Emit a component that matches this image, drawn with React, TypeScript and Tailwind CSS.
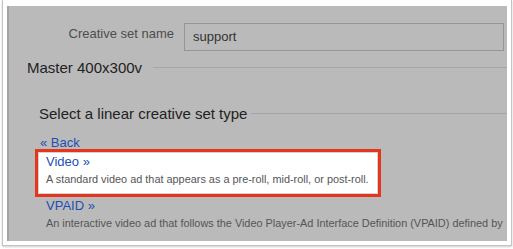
import React from "react";

const SectionTitle: React.FC<{ title: string; className?: string; gap?: string }> = ({ title, className, gap }) => (
  <div className={`flex items-center text-[15px] leading-[17px] text-[#222] ${className ?? ""}`}>
    <span className="whitespace-nowrap">{title}</span>
    <div className={`flex-1 h-px bg-[#a6a6a6] ${gap ?? "ml-[11px]"}`} />
  </div>
);

const App: React.FC = () => {
  return (
    <div className="w-[513px] h-[249px] bg-white overflow-hidden font-['Liberation_Sans',Arial,sans-serif]">
      <div className="ml-[2px] w-[510px] h-[246px] border-x border-b border-[#c4c4c4] shadow-[0_1px_2px_rgba(0,0,0,0.2)] pt-[6px] px-[4px] pb-[4px]">
        <div className="h-[235px] bg-[#bababa] border-l-2 border-[#a3a3a3] overflow-hidden">
          {/* name row */}
          <div className="flex items-start pt-[17px]">
            <label className="w-[165px] text-right text-[13px] leading-[15px] text-[#4d4d4d] mt-[3px]">
              Creative set name
            </label>
            <div className="ml-[10px] mr-[3px] flex-1 h-[28px] border border-[#969696] pl-[8px] flex items-center text-[13px] text-[#333]">
              support
            </div>
          </div>

          <SectionTitle title="Master 400x300v" className="mt-[8px] pl-[18px]" />

          <SectionTitle title="Select a linear creative set type" className="mt-[29px] pl-[30px]" gap="ml-[4px]" />

          <a className="block mt-[14px] ml-[31px] text-[13px] leading-[13px] text-[#1f4fb2]">
            « Back
          </a>

          <div className="ml-[26px] w-[346px] h-[48px] border-[3px] border-[#e5351d]">
            <div className="h-full bg-white border border-[#d2d2d2] pl-[7px] pt-[1px]">
              <a className="block text-[13px] leading-[15px] text-[#1f4fb2]">Video »</a>
              <p className="mt-[3px] text-[10.9px] leading-[14px] text-[#555] whitespace-nowrap">
                A standard video ad that appears as a pre-roll, mid-roll, or post-roll.
              </p>
            </div>
          </div>

          <div className="pl-[37px] pt-[1px]">
            <a className="block text-[13px] leading-[15px] text-[#1f4fb2]">VPAID »</a>
            <p className="mt-[3px] text-[10.9px] leading-[14px] text-[#555] whitespace-nowrap">
              An interactive video ad that follows the Video Player-Ad Interface Definition (VPAID) defined by
            </p>
          </div>
        </div>
      </div>
    </div>
  );
};

export default App;
